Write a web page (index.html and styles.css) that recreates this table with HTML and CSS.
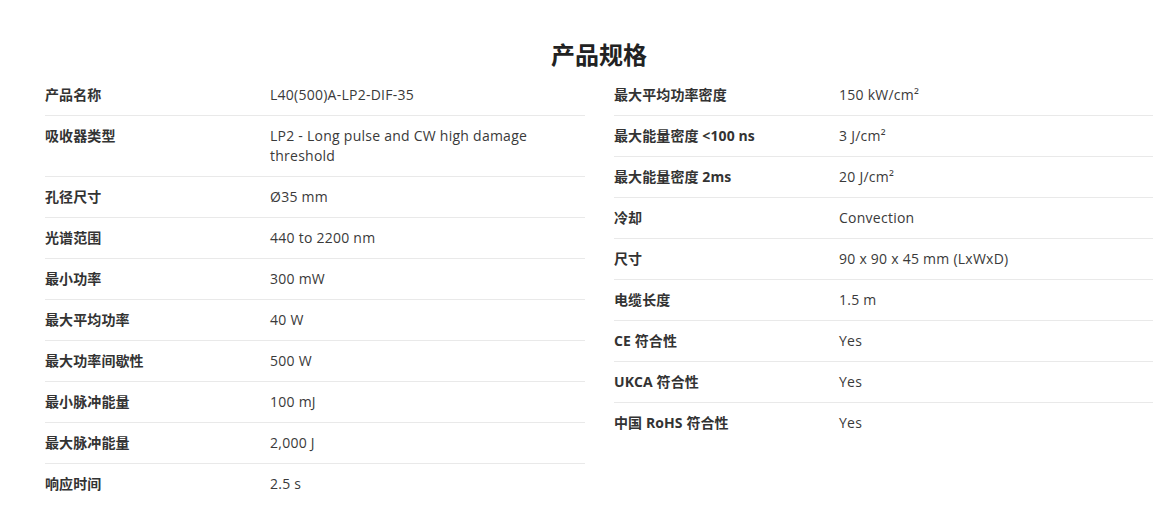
FILE: index.html
```html
<!DOCTYPE html>
<html lang="zh-CN">
<head>
<meta charset="utf-8">
<title>产品规格</title>
<link rel="stylesheet" href="styles.css">
</head>
<body>
<div class="specs">
  <h2 class="title">产品规格</h2>
  <div class="columns">
    <div class="col">
      <div class="row"><div class="label">产品名称</div><div class="value">L40(500)A-LP2-DIF-35</div></div>
      <div class="row"><div class="label">吸收器类型</div><div class="value">LP2 - Long pulse and CW high damage threshold</div></div>
      <div class="row"><div class="label">孔径尺寸</div><div class="value">Ø35 mm</div></div>
      <div class="row"><div class="label">光谱范围</div><div class="value">440 to 2200 nm</div></div>
      <div class="row"><div class="label">最小功率</div><div class="value">300 mW</div></div>
      <div class="row"><div class="label">最大平均功率</div><div class="value">40 W</div></div>
      <div class="row"><div class="label">最大功率间歇性</div><div class="value">500 W</div></div>
      <div class="row"><div class="label">最小脉冲能量</div><div class="value">100 mJ</div></div>
      <div class="row"><div class="label">最大脉冲能量</div><div class="value">2,000 J</div></div>
      <div class="row"><div class="label">响应时间</div><div class="value">2.5 s</div></div>
    </div>
    <div class="col">
      <div class="row"><div class="label">最大平均功率密度</div><div class="value">150 kW/cm²</div></div>
      <div class="row"><div class="label">最大能量密度 &lt;100 ns</div><div class="value">3 J/cm²</div></div>
      <div class="row"><div class="label">最大能量密度 2ms</div><div class="value">20 J/cm²</div></div>
      <div class="row"><div class="label">冷却</div><div class="value">Convection</div></div>
      <div class="row"><div class="label">尺寸</div><div class="value">90 x 90 x 45 mm (LxWxD)</div></div>
      <div class="row"><div class="label">电缆长度</div><div class="value">1.5 m</div></div>
      <div class="row"><div class="label">CE 符合性</div><div class="value">Yes</div></div>
      <div class="row"><div class="label">UKCA 符合性</div><div class="value">Yes</div></div>
      <div class="row"><div class="label">中国 RoHS 符合性</div><div class="value">Yes</div></div>
    </div>
  </div>
</div>
</body>
</html>
```

FILE: styles.css
```css
html, body {
  margin: 0;
  padding: 0;
  background: #ffffff;
}

body {
  font-family: "Open Sans", "Noto Sans CJK SC", sans-serif;
  font-size: 14px;
  line-height: 20px;
  color: #333333;
}

.specs {
  padding: 0 21px 0 45px;
}

.title {
  margin: 39px 0 4px;
  font-size: 24px;
  line-height: 32px;
  font-weight: 700;
  text-align: center;
  color: #222222;
}

.columns {
  display: grid;
  grid-template-columns: 540px 539px;
  column-gap: 29px;
  align-items: start;
}

.row {
  display: grid;
  grid-template-columns: 225px 1fr;
  padding: 10px 0;
  border-bottom: 1px solid #e9e9e9;
}

.row:last-child {
  border-bottom: none;
}

.label {
  font-weight: 700;
  color: #333333;
  letter-spacing: 0.1px;
}

.value {
  color: #3a3a3a;
  padding-right: 20px;
  letter-spacing: 0.25px;
}
```
